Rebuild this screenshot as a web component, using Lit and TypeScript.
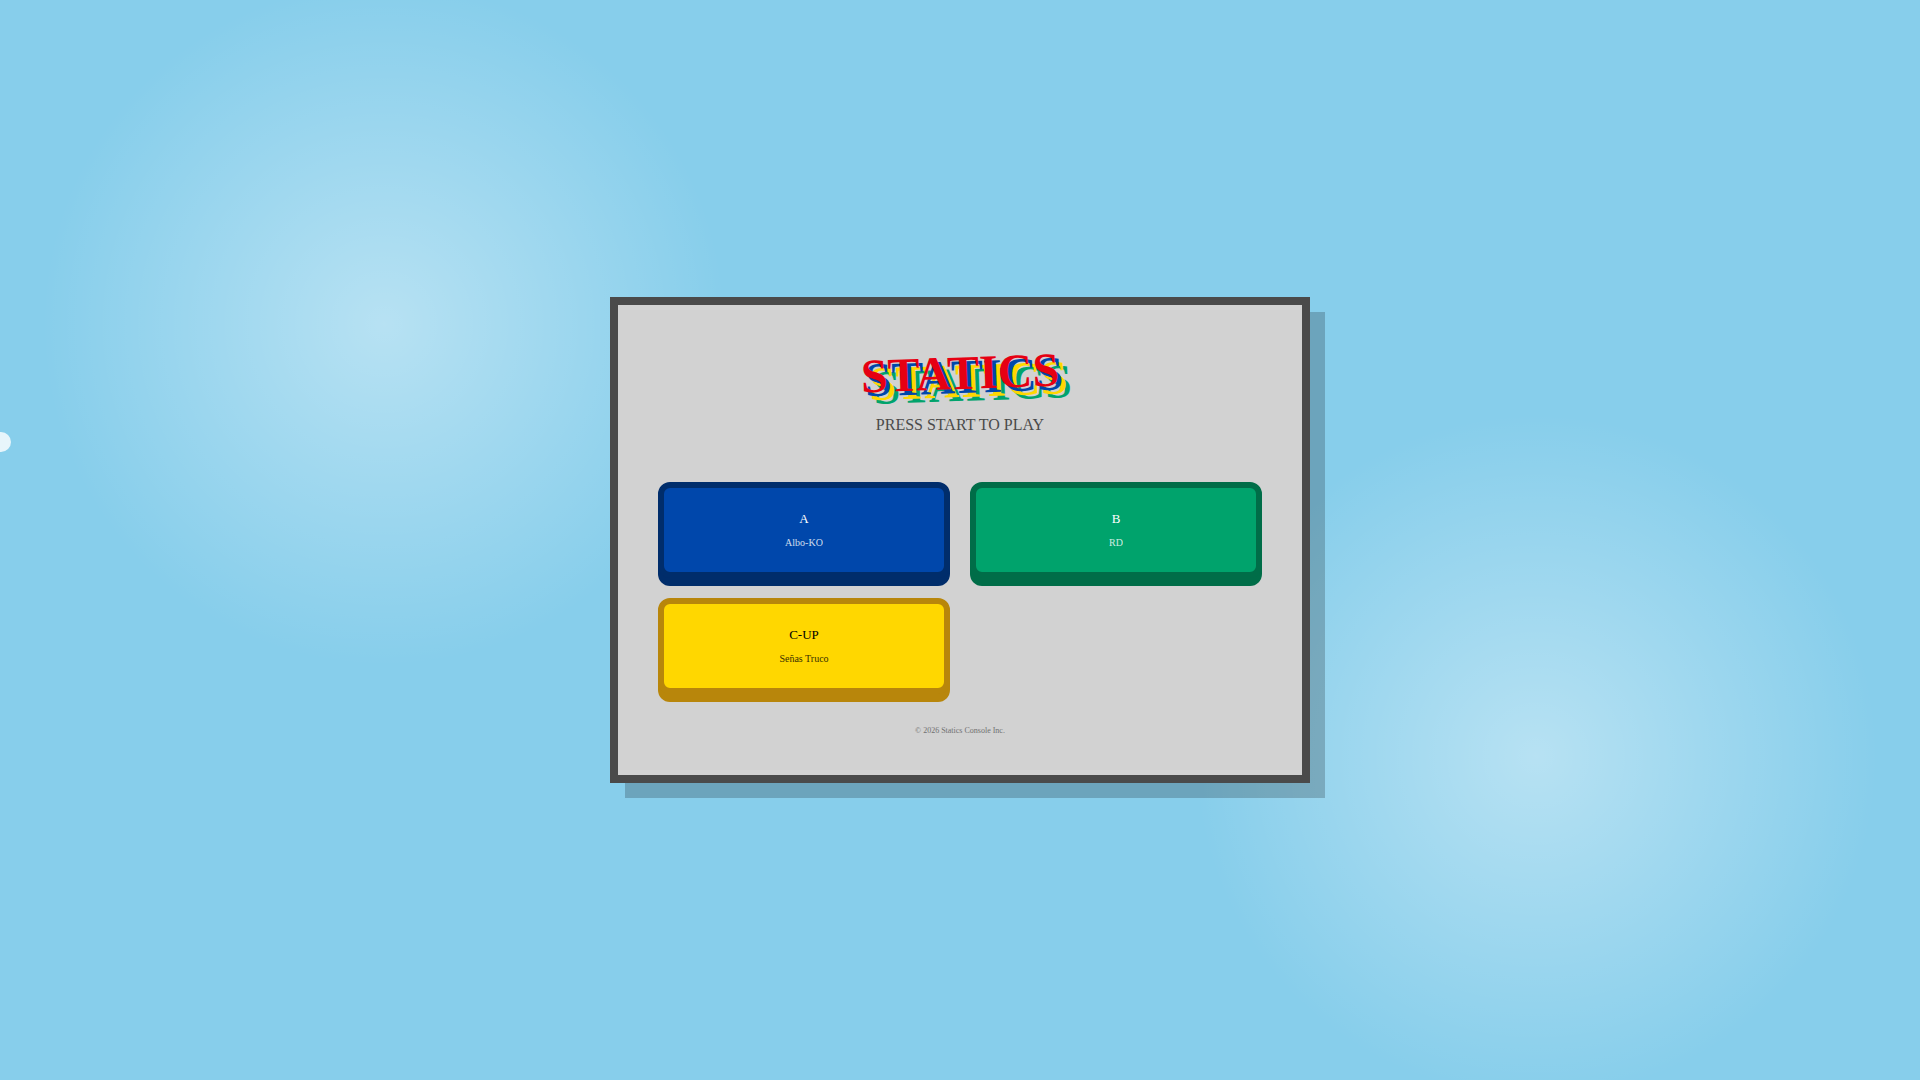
import { LitElement, html, css } from "lit";
import { customElement } from "lit/decorators.js";

interface Entry {
  key: string;
  name: string;
  tone: string;
}

const ENTRIES: Entry[] = [
  { key: "A", name: "Albo-KO", tone: "blue" },
  { key: "B", name: "RD", tone: "green" },
  { key: "C-UP", name: "Señas Truco", tone: "yellow" },
];

@customElement("app-root")
export class AppRoot extends LitElement {
  static styles = css`
    :host {
      display: flex;
      position: relative;
      box-sizing: border-box;
      min-height: 100vh;
      align-items: center;
      justify-content: center;
      overflow: hidden;
      font-family: "Liberation Serif", "Times New Roman", serif;
      background:
        radial-gradient(circle at 20% 30%, rgba(255, 255, 255, 0.4) 0%, transparent 20%),
        radial-gradient(circle at 80% 70%, rgba(255, 255, 255, 0.4) 0%, transparent 20%),
        #87ceeb;
    }
    .cloud {
      position: absolute;
      top: 40%;
      left: -49px;
      width: 60px;
      height: 20px;
      border-radius: 20px;
      background: #fff;
      opacity: 0.8;
    }
    .console {
      box-sizing: border-box;
      width: 90%;
      max-width: 700px;
      padding: 40px;
      border: 8px solid #4a4a4a;
      background: #d2d2d2;
      box-shadow: 15px 15px 0 rgba(0, 0, 0, 0.2);
      text-align: center;
    }
    .logo {
      margin: 0 0 16px;
      font-size: 48px;
      line-height: 55px;
      color: #e60012;
      text-shadow: 4px 4px 0 #0047ab, 8px 8px 0 #ffd700, 12px 12px 0 #00a36c;
      transform: rotate(-2deg);
    }
    .tagline {
      margin: 0 0 48px;
      font-size: 16px;
      line-height: 18px;
      color: #4a4a4a;
    }
    .pads {
      display: grid;
      grid-template-columns: repeat(2, 1fr);
      gap: 20px;
    }
    .pad {
      display: flex;
      flex-direction: column;
      align-items: center;
      gap: 11px;
      padding: 23px;
      border: 6px solid;
      border-radius: 12px;
      font-family: inherit;
      font-size: 13px;
      line-height: 15px;
      color: #fff;
      cursor: pointer;
    }
    .pad:active {
      transform: translateY(4px);
    }
    .name {
      font-size: 10px;
      line-height: 12px;
      opacity: 0.8;
    }
    .blue {
      background: #0047ab;
      border-color: #002d6b;
      box-shadow: 0 8px 0 #002d6b;
    }
    .green {
      background: #00a36c;
      border-color: #006d48;
      box-shadow: 0 8px 0 #006d48;
    }
    .yellow {
      background: #ffd700;
      border-color: #b8860b;
      box-shadow: 0 8px 0 #b8860b;
      color: #000;
    }
    .legal {
      margin: 32px 0 0;
      font-size: 8px;
      line-height: 9px;
      color: #707070;
    }
  `;

  render() {
    return html`
      <div class="cloud"></div>
      <main class="console">
        <h1 class="logo">STATICS</h1>
        <p class="tagline">PRESS START TO PLAY</p>
        <nav class="pads">
          ${ENTRIES.map(
            (e) => html`
              <button class="pad ${e.tone}" type="button">
                <span>${e.key}</span>
                <span class="name">${e.name}</span>
              </button>
            `
          )}
        </nav>
        <p class="legal">© 2026 Statics Console Inc.</p>
      </main>
    `;
  }
}
